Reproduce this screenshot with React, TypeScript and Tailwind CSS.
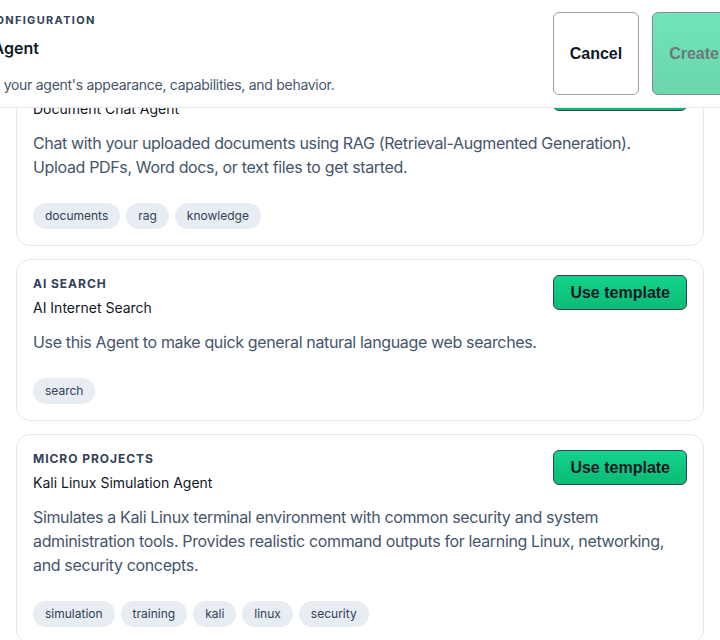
type Template = {
  category: string;
  name: string;
  description: string;
  tags: string[];
};

const templates: Template[] = [
  {
    category: 'Knowledge',
    name: 'Document Chat Agent',
    description:
      'Chat with your uploaded documents using RAG (Retrieval-Augmented Generation). Upload PDFs, Word docs, or text files to get started.',
    tags: ['documents', 'rag', 'knowledge'],
  },
  {
    category: 'AI Search',
    name: 'AI Internet Search',
    description: 'Use this Agent to make quick general natural language web searches.',
    tags: ['search'],
  },
  {
    category: 'Micro Projects',
    name: 'Kali Linux Simulation Agent',
    description:
      'Simulates a Kali Linux terminal environment with common security and system administration tools. Provides realistic command outputs for learning Linux, networking, and security concepts.',
    tags: ['simulation', 'training', 'kali', 'linux', 'security'],
  },
];

function TemplateCard({ t }: { t: Template }) {
  return (
    <div className="rounded-[14px] border border-gray-200 bg-white p-4">
      <div className="flex items-start justify-between gap-4">
        <div>
          <p className="text-xs leading-4 font-bold uppercase tracking-[0.08em] text-slate-700">{t.category}</p>
          <p className="mt-1.5 text-sm leading-5 text-gray-900">{t.name}</p>
        </div>
        <button className="-mt-px h-[35px] shrink-0 rounded-md border border-gray-700 bg-gradient-to-b from-[#12d38b] to-[#0bbb75] px-4 font-['Liberation_Sans',Arial,sans-serif] text-base font-bold text-gray-900">
          Use template
        </button>
      </div>
      <p className="mt-3 max-w-[640px] text-base leading-6 tracking-[-0.022em] text-slate-600">{t.description}</p>
      <div className="mt-6 flex flex-wrap gap-1.5">
        {t.tags.map(tag => (
          <span key={tag} className="rounded-full bg-[#e8edf3] px-3 py-[5px] text-xs leading-4 text-slate-700">
            {tag}
          </span>
        ))}
      </div>
    </div>
  );
}

export default function App() {
  return (
    <div className="h-[640px] w-[720px] overflow-hidden bg-white font-['Inter','Noto_Sans',sans-serif]">
      {/* Sticky header, page is scrolled sideways */}
      <header className="relative z-10 -ml-[63px] -mr-[32px] flex items-stretch gap-4 border-b border-gray-200 bg-white py-3 pr-4">
        <div className="flex-1">
          <p className="text-[11px] leading-4 font-bold uppercase tracking-[0.12em] text-slate-700">Agent Configuration</p>
          <h1 className="mt-2 text-base leading-6 font-semibold text-gray-900">Create Agent</h1>
          <p className="mt-[15px] text-sm leading-5 tracking-[-0.02em] text-slate-600">
            Configure your agent's appearance, capabilities, and behavior.
          </p>
        </div>
        <div className="flex gap-[13px]">
          <button className="rounded-md border border-gray-400 bg-white px-4 font-['Liberation_Sans',Arial,sans-serif] text-base font-bold text-gray-900">
            Cancel
          </button>
          <button
            disabled
            className="rounded-md border border-gray-700 bg-gradient-to-b from-[#12d38b] to-[#0bbb75] px-4 font-['Liberation_Sans',Arial,sans-serif] text-base font-bold text-gray-900 opacity-60"
          >
            Create
          </button>
        </div>
      </header>

      <div className="-mt-[48px] flex flex-col gap-[13px] px-4">
        {templates.map(t => (
          <TemplateCard key={t.name} t={t} />
        ))}
      </div>
    </div>
  );
}
